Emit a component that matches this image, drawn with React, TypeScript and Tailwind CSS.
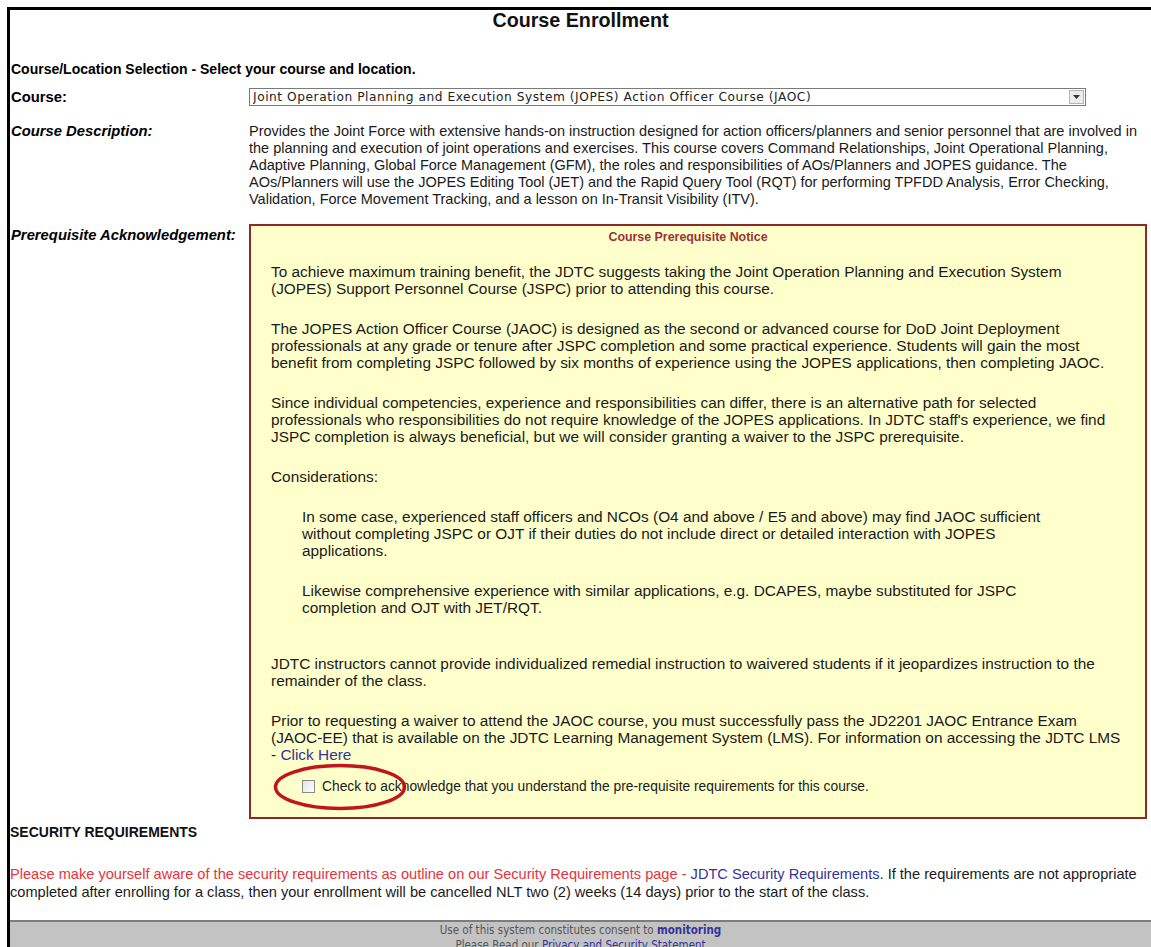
const labelCls = "w-[239px] shrink-0 pl-px font-bold text-[14.8px] leading-[17px] text-black";

function Notice() {
  return (
    <div className="whitespace-nowrap border-2 border-[#8c2a2a] bg-[#ffffcc] pt-[2px] pb-[22px] pl-[20px] pr-[20px] text-[15.4px] leading-[17px] text-[#1a1a1a]">
      <div className="-ml-[20px] text-center text-[12.4px] font-bold leading-[18px] text-[#993333]">
        Course Prerequisite Notice
      </div>
      <p className="mt-[17px]">
        To achieve maximum training benefit, the JDTC suggests taking the Joint Operation Planning and Execution System<br />
        (JOPES) Support Personnel Course (JSPC) prior to attending this course.
      </p>
      <p className="mt-[23px]">
        The JOPES Action Officer Course (JAOC) is designed as the second or advanced course for DoD Joint Deployment<br />
        professionals at any grade or tenure after JSPC completion and some practical experience. Students will gain the most<br />
        benefit from completing JSPC followed by six months of experience using the JOPES applications, then completing JAOC.
      </p>
      <p className="mt-[23px]">
        Since individual competencies, experience and responsibilities can differ, there is an alternative path for selected<br />
        professionals who responsibilities do not require knowledge of the JOPES applications. In JDTC staff's experience, we find<br />
        JSPC completion is always beneficial, but we will consider granting a waiver to the JSPC prerequisite.
      </p>
      <p className="mt-[23px]">Considerations:</p>
      <div className="ml-[31px]">
        <p className="mt-[23px]">
          In some case, experienced staff officers and NCOs (O4 and above / E5 and above) may find JAOC sufficient<br />
          without completing JSPC or OJT if their duties do not include direct or detailed interaction with JOPES<br />
          applications.
        </p>
        <p className="mt-[23px]">
          Likewise comprehensive experience with similar applications, e.g. DCAPES, maybe substituted for JSPC<br />
          completion and OJT with JET/RQT.
        </p>
      </div>
      <p className="mt-[39px]">
        JDTC instructors cannot provide individualized remedial instruction to waivered students if it jeopardizes instruction to the<br />
        remainder of the class.
      </p>
      <p className="mt-[23px]">
        Prior to requesting a waiver to attend the JAOC course, you must successfully pass the JD2201 JAOC Entrance Exam<br />
        (JAOC-EE) that is available on the JDTC Learning Management System (LMS). For information on accessing the JDTC LMS<br />
        - <a className="text-[#333399]">Click Here</a>
      </p>
      <div className="relative mt-[15px] flex items-center pl-[31px] text-[13.8px]">
        <span className="mr-[7px] h-[13px] w-[13px] border border-[#8a8a8a] bg-gradient-to-br from-[#e4e4e4] to-white" />
        <span>Check to acknowledge that you understand the pre-requisite requirements for this course.</span>
        <svg className="absolute left-[2px] top-1/2 -translate-y-1/2" width="134" height="48" viewBox="0 0 134 48">
          <ellipse cx="67" cy="24" rx="64.5" ry="21.5" fill="none" stroke="#c0151c" strokeWidth="3.5" />
        </svg>
      </div>
    </div>
  );
}

export default function App() {
  return (
    <div className="min-h-[947px] bg-white pt-[7px] pl-[7px] font-['Liberation_Sans',Arial,sans-serif]">
      <div className="flex min-h-[940px] flex-col border-t-[3px] border-l-[3px] border-black">
        <h1 className="h-[21px] text-center text-[19.7px] font-bold leading-[21px] text-[#111]">Course Enrollment</h1>

        <div className="mt-[29px] pl-px text-[14px] font-bold leading-[18px] text-black">
          Course/Location Selection - Select your course and location.
        </div>

        {/* course picker */}
        <div className="mt-[10px] flex items-center">
          <div className={labelCls}>Course:</div>
          <div className="flex h-[18px] w-[837px] items-center border border-[#7a7a7a] bg-white pl-[3px] font-['DejaVu_Sans',Verdana,sans-serif] text-[12.2px] tracking-[0.55px] text-[#222]">
            <span className="flex-1 truncate">Joint Operation Planning and Execution System (JOPES) Action Officer Course (JAOC)</span>
            <span className="mr-px flex h-[14px] w-[15px] items-center justify-center border border-[#b5b5b5] bg-[#ececec]">
              <svg width="7" height="4" viewBox="0 0 7 4"><path d="M0 0h7L3.5 4z" fill="#333" /></svg>
            </span>
          </div>
        </div>

        <div className="mt-[17px] flex">
          <div className={labelCls + " italic"}>Course Description:</div>
          <p className="whitespace-nowrap text-[14.5px] leading-[17px] text-[#1a1a1a]">
            Provides the Joint Force with extensive hands-on instruction designed for action officers/planners and senior personnel that are involved in<br />
            the planning and execution of joint operations and exercises. This course covers Command Relationships, Joint Operational Planning,<br />
            Adaptive Planning, Global Force Management (GFM), the roles and responsibilities of AOs/Planners and JOPES guidance. The<br />
            AOs/Planners will use the JOPES Editing Tool (JET) and the Rapid Query Tool (RQT) for performing TPFDD Analysis, Error Checking,<br />
            Validation, Force Movement Tracking, and a lesson on In-Transit Visibility (ITV).
          </p>
        </div>

        <div className="mt-[16px] flex">
          <div className={labelCls + " italic pt-[3px]"}>Prerequisite Acknowledgement:</div>
          <div className="mr-[4px] flex-1">
            <Notice />
          </div>
        </div>

        <div className="mt-[4px] text-[14px] font-bold leading-[18px] text-[#111]">
          SECURITY REQUIREMENTS
        </div>

        <p className="mt-[24px] whitespace-nowrap text-[14.6px] leading-[18px] text-[#1a1a1a]">
          <span className="text-[#e8323c]">Please make yourself aware of the security requirements as outline on our Security Requirements page - </span>
          <a className="text-[#333399]">JDTC Security Requirements</a>. If the requirements are not appropriate<br />
          completed after enrolling for a class, then your enrollment will be cancelled NLT two (2) weeks (14 days) prior to the start of the class.
        </p>

        {/* footer bar */}
        <footer className="mt-[19px] flex-1 border-t-2 border-[#7d7d7d] bg-[#c3c3c3] pt-[1px] text-center font-['DejaVu_Sans_Condensed','DejaVu_Sans',Tahoma,sans-serif] text-[11.5px] leading-[15px] text-[#555]">
          <div>
            Use of this system constitutes consent to <a className="font-bold text-[#333399]">monitoring</a>
          </div>
          <div>
            Please Read our <a className="text-[#333399]">Privacy and Security Statement</a>
          </div>
        </footer>
      </div>
    </div>
  );
}
